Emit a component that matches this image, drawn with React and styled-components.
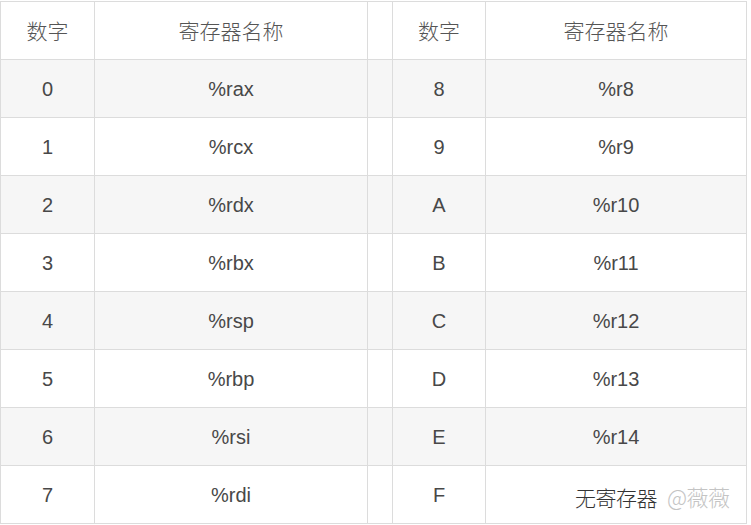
import React from 'react';
import styled, { createGlobalStyle } from 'styled-components';

const GlobalStyle = createGlobalStyle`
  body {
    margin: 0;
    background: #fff;
    font-family: "Liberation Sans", Arial, "Noto Sans CJK SC", sans-serif;
  }
`;

const rows = [
  ['0', '%rax', '8', '%r8'],
  ['1', '%rcx', '9', '%r9'],
  ['2', '%rdx', 'A', '%r10'],
  ['3', '%rbx', 'B', '%r11'],
  ['4', '%rsp', 'C', '%r12'],
  ['5', '%rbp', 'D', '%r13'],
  ['6', '%rsi', 'E', '%r14'],
  ['7', '%rdi', 'F', ''],
];

const Wrap = styled.div`
  position: relative;
  width: 746px;
  padding-top: 1px;
`;

const Table = styled.table`
  border-collapse: collapse;
  table-layout: fixed;
  width: 746px;
  color: #484848;
  font-size: 20px;
`;

const Row = styled.tr`
  height: 58px;
  background: ${(p) => (p.$shaded ? '#f6f6f6' : '#fff')};
`;

const Cell = styled.td`
  border: 1px solid #dcdcdc;
  text-align: center;
  vertical-align: middle;
  padding: 2px 0 0;
  font-family: "Liberation Sans", Arial, sans-serif;
  font-size: 20px;
  color: #484848;
`;

const HeadCell = styled(Cell)`
  padding: 0 0 2px;
  font-family: "Noto Sans CJK SC", sans-serif;
  font-size: 21px;
  font-weight: 300;
  color: #555;
`;

const Watermark = styled.div`
  position: absolute;
  left: 575px;
  top: 480px;
  font-family: "Noto Sans CJK SC", sans-serif;
  font-size: 21px;
  font-weight: 300;
  color: #333;
  white-space: nowrap;
  letter-spacing: -0.5px;
  span {
    color: #c4c4c4;
    margin-left: 10px;
    font-size: 22px;
  }
`;

export default function App() {
  return (
    <>
      <GlobalStyle />
      <Wrap>
        <Table>
          <colgroup>
            <col style={{ width: 94 }} />
            <col style={{ width: 273 }} />
            <col style={{ width: 25 }} />
            <col style={{ width: 93 }} />
            <col style={{ width: 261 }} />
          </colgroup>
          <tbody>
            <Row>
              <HeadCell>数字</HeadCell>
              <HeadCell>寄存器名称</HeadCell>
              <HeadCell />
              <HeadCell>数字</HeadCell>
              <HeadCell>寄存器名称</HeadCell>
            </Row>
            {rows.map((r, i) => (
              <Row key={i} $shaded={i % 2 === 0}>
                <Cell>{r[0]}</Cell>
                <Cell>{r[1]}</Cell>
                <Cell />
                <Cell>{r[2]}</Cell>
                <Cell>{r[3]}</Cell>
              </Row>
            ))}
          </tbody>
        </Table>
        <Watermark>
          无寄存器<span>@薇薇</span>
        </Watermark>
      </Wrap>
    </>
  );
}
